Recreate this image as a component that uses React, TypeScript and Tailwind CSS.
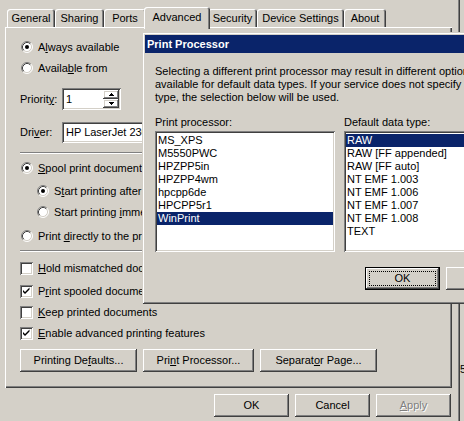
import React from 'react';

const raised =
  'shadow-[inset_-1px_-1px_#404040,inset_1px_1px_#ffffff,inset_-2px_-2px_#808080,inset_2px_2px_#d4d0c8]';
const sunken =
  'shadow-[inset_1px_1px_#808080,inset_-1px_-1px_#ffffff,inset_2px_2px_#404040,inset_-2px_-2px_#d4d0c8]';
const tabEdge = 'shadow-[inset_1px_1px_#ffffff,inset_-1px_0_#404040,inset_-2px_0_#808080]';

// "&" marks the access key, underlined like in the classic dialogs
const Label = ({ text }: { text: string }) => {
  const i = text.indexOf('&');
  if (i < 0) return <>{text}</>;
  return (
    <>
      {text.slice(0, i)}
      <u className="underline">{text[i + 1]}</u>
      {text.slice(i + 2)}
    </>
  );
};

const Radio = ({ checked }: { checked?: boolean }) => (
  <svg width="12" height="12" viewBox="0 0 12 12" className="shrink-0">
    <circle cx="6" cy="6" r="5" fill="#ffffff" />
    <path d="M2.11 9.89A5.5 5.5 0 0 1 9.89 2.11" stroke="#808080" fill="none" />
    <path d="M9.89 2.11A5.5 5.5 0 0 1 2.11 9.89" stroke="#ffffff" fill="none" />
    <path d="M2.82 9.18A4.5 4.5 0 0 1 9.18 2.82" stroke="#404040" fill="none" />
    <path d="M9.18 2.82A4.5 4.5 0 0 1 2.82 9.18" stroke="#d4d0c8" fill="none" />
    {checked && <circle cx="6" cy="6" r="2" fill="#000000" />}
  </svg>
);

const Check = ({ checked }: { checked?: boolean }) => (
  <span className={`block w-[13px] h-[13px] shrink-0 bg-white ${sunken}`}>
    {checked && (
      <svg width="13" height="13" viewBox="0 0 13 13">
        <path d="M3 5v2l2 2 4.5-4.5v-2L5 7z" fill="#000000" />
      </svg>
    )}
  </span>
);

const Arrow = ({ down }: { down?: boolean }) => (
  <svg width="5" height="3" viewBox="0 0 5 3" className={down ? 'rotate-180' : ''}>
    <path d="M2 0h1v1h1v1h1v1H0V2h1V1h1z" fill="#000000" />
  </svg>
);

const RadioRow = ({ text, checked, sub, mt }: { text: string; checked?: boolean; sub?: boolean; mt: string }) => (
  <div className={`flex items-center h-[16px] gap-[5px] ${sub ? 'ml-[17px]' : 'ml-[1px]'} ${mt}`}>
    <Radio checked={checked} />
    <span className="whitespace-nowrap">
      <Label text={text} />
    </span>
  </div>
);

const CheckRow = ({ text, checked, mt }: { text: string; checked?: boolean; mt: string }) => (
  <div className={`flex items-center h-[16px] gap-[5px] ${mt}`}>
    <Check checked={checked} />
    <span className="whitespace-nowrap">
      <Label text={text} />
    </span>
  </div>
);

const Button = ({ text, w, disabled }: { text: string; w: string; disabled?: boolean }) => (
  <div
    className={`${w} h-[23px] flex items-center justify-center ${raised} ${
      disabled ? 'text-[#808080] [text-shadow:1px_1px_#ffffff]' : ''
    }`}
  >
    <Label text={text} />
  </div>
);

const Separator = ({ mt }: { mt: string }) => (
  <div className={`${mt} mr-[15px]`}>
    <div className="h-px bg-[#808080]" />
    <div className="h-px bg-white" />
  </div>
);

const ListBox = ({ items, selected }: { items: string[]; selected: number }) => (
  <div className={`mt-[2px] h-[121px] bg-white ${sunken} pt-[3px] px-[2px] overflow-hidden`}>
    {items.map((item, i) => (
      <div
        key={item}
        className={`h-[13px] leading-[13px] pl-[1px] whitespace-nowrap ${
          i === selected ? 'bg-[#0a246a] text-white' : ''
        }`}
      >
        {item}
      </div>
    ))}
  </div>
);

const tabs = [
  { name: 'General', w: 'w-[48px]' },
  { name: 'Sharing', w: 'w-[49px]' },
  { name: 'Ports', w: 'w-[42px]' },
  { name: 'Advanced', w: 'w-[66px]', active: true },
  { name: 'Security', w: 'w-[49px]' },
  { name: 'Device Settings', w: 'w-[87px]' },
  { name: 'About', w: 'w-[42px]' },
];

const processors = ['MS_XPS', 'M5550PWC', 'HPZPP5in', 'HPZPP4wm', 'hpcpp6de', 'HPCPP5r1', 'WinPrint'];
const dataTypes = [
  'RAW',
  'RAW [FF appended]',
  'RAW [FF auto]',
  'NT EMF 1.003',
  'NT EMF 1.006',
  'NT EMF 1.007',
  'NT EMF 1.008',
  'TEXT',
];

export default function App() {
  return (
    <div className="relative w-[464px] h-[421px] overflow-hidden bg-[#d4d0c8] text-black text-[11px] font-['Liberation_Sans',Arial,sans-serif]">
      {/* printer properties window */}
      <div className="w-[460px] h-[421px] pl-[5px] pt-[7px] shadow-[inset_-1px_0_#404040,inset_-2px_0_#808080]">
        <div className="flex items-end h-[20px] ml-[2px]">
          {tabs.map((t) =>
            t.active ? (
              <div
                key={t.name}
                className={`relative z-10 -mx-[2px] -mb-[2px] h-[22px] pb-[2px] flex items-center justify-center bg-[#d4d0c8] rounded-t-[3px] ${t.w} ${tabEdge}`}
              >
                {t.name}
              </div>
            ) : (
              <div
                key={t.name}
                className={`h-[18px] flex items-center justify-center rounded-t-[3px] whitespace-nowrap ${t.w} ${tabEdge}`}
              >
                {t.name}
              </div>
            )
          )}
        </div>

        <div className="flex flex-col w-[447px] h-[361px] pl-[15px] pt-[12px] shadow-[inset_1px_1px_#ffffff,inset_-1px_-1px_#404040,inset_-2px_-2px_#808080]">
          <RadioRow text="A&lways available" checked mt="" />
          <div className="flex items-center h-[16px] gap-[5px] ml-[1px] mt-[5px]">
            <Radio />
            <span className="w-[102px] whitespace-nowrap">
              <Label text="Availa&ble from" />
            </span>
            <div className={`w-[120px] h-[22px] shrink-0 ${sunken}`} />
          </div>

          <div className="flex items-center h-[22px] mt-[12px]">
            <span className="w-[42px]">
              <Label text="Priorit&y:" />
            </span>
            <div className={`relative w-[59px] h-[22px] bg-white flex items-center pl-[4px] ${sunken}`}>
              1
              <div className="absolute right-[2px] top-[2px] bottom-[2px] w-[16px] flex flex-col">
                <div className={`flex-1 flex items-center justify-center ${raised}`}>
                  <Arrow />
                </div>
                <div className={`flex-1 flex items-center justify-center ${raised}`}>
                  <Arrow down />
                </div>
              </div>
            </div>
          </div>

          <div className="flex items-center h-[21px] mt-[12px]">
            <span className="w-[42px]">
              <Label text="Dri&ver:" />
            </span>
            <div className={`w-[300px] h-[21px] bg-white flex items-center pl-[4px] whitespace-nowrap ${sunken}`}>
              HP LaserJet 2300 Series PCL 6
            </div>
          </div>

          <Separator mt="mt-[9px]" />

          <RadioRow text="&Spool print documents so program finishes printing faster" checked mt="mt-[6px]" />
          <RadioRow text="S&tart printing after last page is spooled" checked sub mt="mt-[7px]" />
          <RadioRow text="Start printing &immediately" sub mt="mt-[5px]" />
          <RadioRow text="Print &directly to the printer" mt="mt-[8px]" />

          <Separator mt="mt-[6px]" />

          <CheckRow text="&Hold mismatched documents" mt="mt-[8px]" />
          <CheckRow text="P&rint spooled documents first" checked mt="mt-[7px]" />
          <CheckRow text="&Keep printed documents" mt="mt-[5px]" />
          <CheckRow text="&Enable advanced printing features" checked mt="mt-[5px]" />

          <div className="flex gap-[6px] mt-[8px]">
            <Button text="Printing De&faults..." w="w-[117px]" />
            <Button text="Pri&nt Processor..." w="w-[111px]" />
            <Button text="Separat&or Page..." w="w-[117px]" />
          </div>
        </div>

        <div className="flex justify-end gap-[6px] w-[446px] mt-[6px]">
          <Button text="OK" w="w-[75px]" />
          <Button text="Cancel" w="w-[75px]" />
          <Button text="&Apply" w="w-[75px]" disabled />
        </div>
      </div>

      <span className="absolute left-[460px] top-[363px] leading-[13px]">5</span>

      {/* Print Processor dialog on top */}
      <div className="absolute left-[142px] top-[32px] w-[390px] h-[272px] p-[3px] bg-[#d4d0c8] shadow-[inset_1px_1px_#d4d0c8,inset_-1px_-1px_#404040,inset_2px_2px_#ffffff,inset_-2px_-2px_#808080]">
        <div className="h-[18px] bg-[#0a246a] text-white font-bold flex items-center pl-[2px]">
          Print Processor
        </div>
        <div className="pl-[10px] pr-[8px] pt-[12px]">
          <div className="leading-[13px] whitespace-nowrap">
            <div>Selecting a different print processor may result in different options being</div>
            <div>available for default data types. If your service does not specify a data</div>
            <div>type, the selection below will be used.</div>
          </div>

          <div className="flex gap-[9px] mt-[12px]">
            <div className="w-[180px]">
              <div className="leading-[13px]">Print processor:</div>
              <ListBox items={processors} selected={6} />
            </div>
            <div className="flex-1">
              <div className="leading-[13px]">Default data type:</div>
              <ListBox items={dataTypes} selected={0} />
            </div>
          </div>

          <div className="flex justify-end gap-[6px] mt-[15px]">
            <div className={`relative w-[75px] h-[23px] border border-black flex items-center justify-center ${raised}`}>
              OK
              <span className="absolute inset-[3px] border border-dotted border-black" />
            </div>
            <Button text="Cancel" w="w-[75px]" />
          </div>
        </div>
      </div>
    </div>
  );
}
